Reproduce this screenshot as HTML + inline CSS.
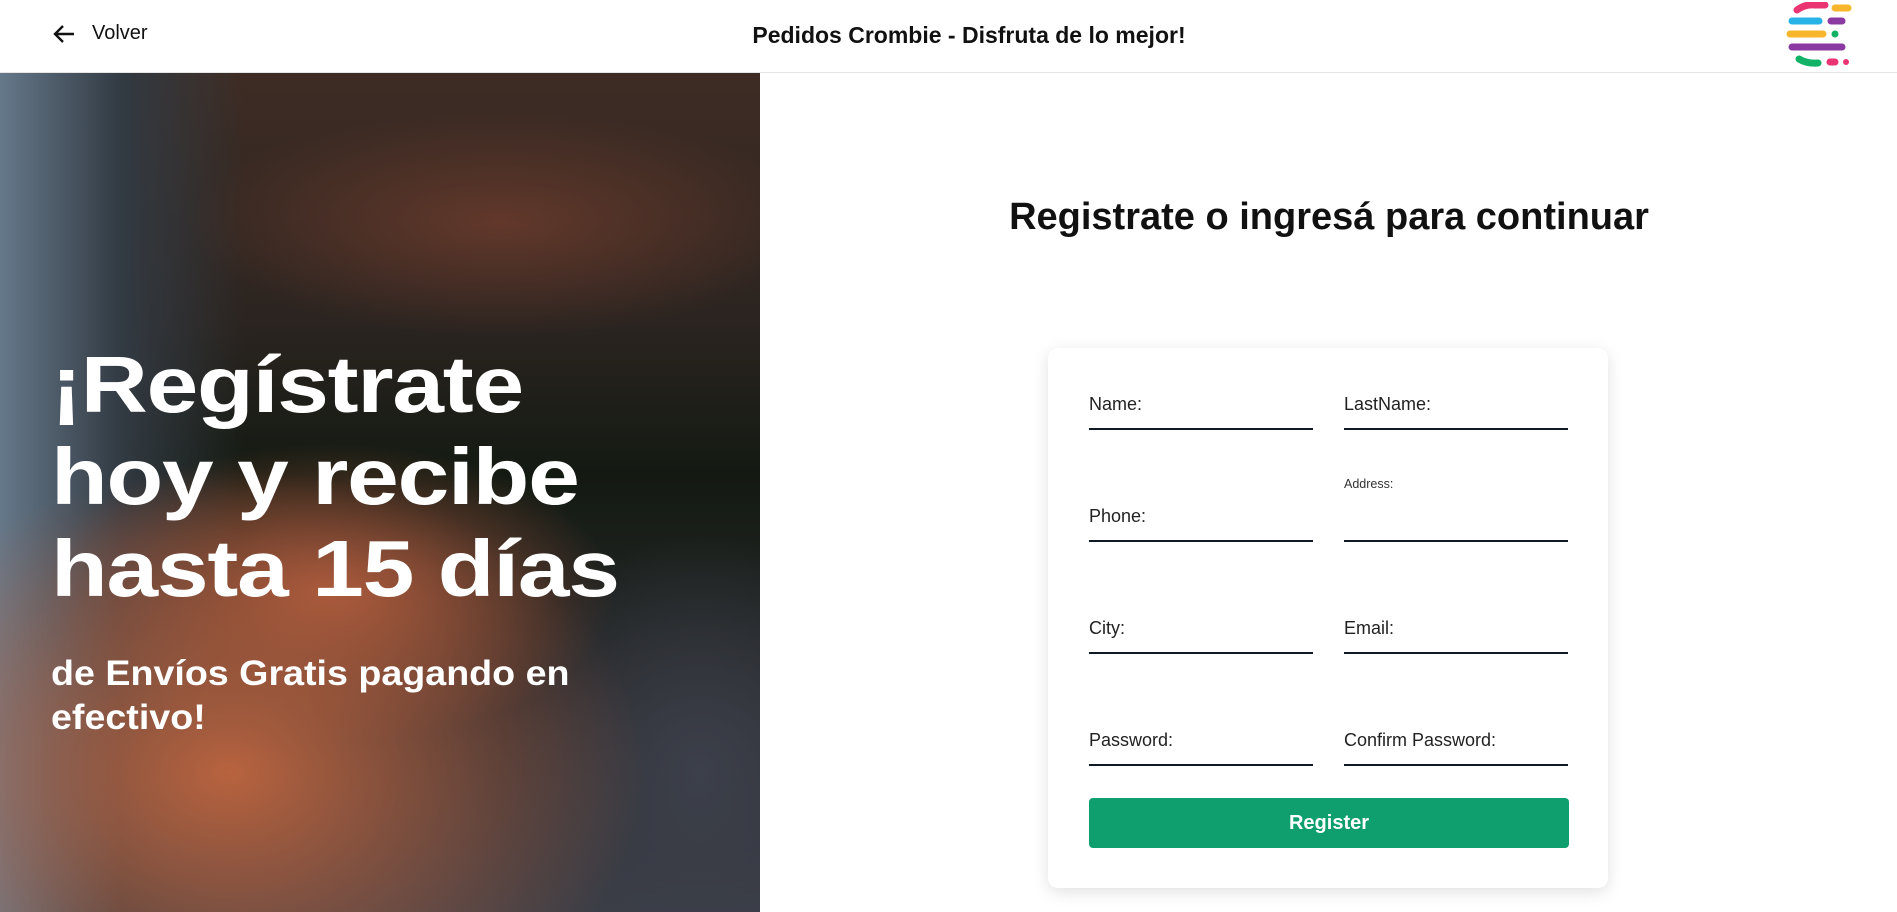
<!DOCTYPE html>
<html><head><meta charset="utf-8"><style>
*{margin:0;padding:0;box-sizing:border-box}
body{width:1897px;height:912px;overflow:hidden;background:#fff;font-family:"Liberation Sans",sans-serif;position:relative;color:#111}
.hdr{position:absolute;left:0;top:0;width:1897px;height:73px;border-bottom:1px solid #e5e5e5;background:#fff}
.back{position:absolute;left:52px;top:22px;display:flex;align-items:center;font-size:20px;font-weight:500}
.back svg{margin-right:16px}
.title{position:absolute;left:0;width:1938px;text-align:center;top:22px;font-size:23px;font-weight:600}
.logo{position:absolute;left:1785px;top:2px}
.img{position:absolute;left:0;top:73px;width:760px;height:839px;overflow:hidden;
background:
radial-gradient(ellipse 420px 150px at 500px 150px,rgba(110,60,45,.8),transparent 75%),
radial-gradient(ellipse 520px 380px at 230px 700px,#b8633f,transparent 80%),
radial-gradient(ellipse 380px 200px at 330px 520px,#a4553a,transparent 75%),
radial-gradient(ellipse 250px 300px at 700px 700px,#3c404a,transparent 80%),
linear-gradient(90deg,#65788a 0,#323a42 16%,transparent 32%),
linear-gradient(180deg,#3e2c24 0,#2b2420 30%,#131a12 48%,#2a2a2e 75%,#3a3d46 100%)}
.h1{position:absolute;left:51px;color:#fff;font-size:80px;font-weight:700;line-height:92px;letter-spacing:-1px;transform:scaleX(1.16);transform-origin:0 0;white-space:nowrap}
.h2{position:absolute;left:51px;color:#fff;font-size:35px;font-weight:700;line-height:44px;transform:scaleX(1.075);transform-origin:0 0;white-space:nowrap}
.head{position:absolute;left:960px;width:738px;text-align:center;top:196px;font-size:38px;font-weight:700}
.card{position:absolute;left:1048px;top:348px;width:560px;height:540px;background:#fff;border-radius:10px;box-shadow:0 4px 16px rgba(0,0,0,.12)}
.f{position:absolute;width:224px;border-bottom:2px solid #111827;height:40px}
.f span{position:absolute;left:0;bottom:13px;font-size:18px;color:#222}
.sm{position:absolute;font-size:12.5px;color:#333}
.btn{position:absolute;left:1089px;top:798px;width:480px;height:50px;background:#0f9f6e;border-radius:4px;color:#fff;font-weight:700;font-size:20px;text-align:center;line-height:50px}
</style></head><body>
<div class="hdr">
<div class="back"><svg width="24" height="22" viewBox="0 0 24 22"><path d="M22 11H3M11 3L3 11l8 8" fill="none" stroke="#111" stroke-width="2.4"/></svg>Volver</div>
<div class="title">Pedidos Crombie - Disfruta de lo mejor!</div>
<svg class="logo" width="70" height="66" viewBox="0 0 70 66">
<path d="M12 8 Q20 2 30 3 L40 3" stroke="#ea3572" stroke-width="7" stroke-linecap="round" fill="none"/>
<line x1="50" y1="6" x2="63" y2="6" stroke="#f8b62c" stroke-width="7" stroke-linecap="round"/>
<line x1="7" y1="19" x2="34" y2="19" stroke="#27b3e6" stroke-width="7" stroke-linecap="round"/>
<line x1="46" y1="19" x2="57" y2="19" stroke="#8a3aa0" stroke-width="7" stroke-linecap="round"/>
<line x1="5" y1="32" x2="38" y2="32" stroke="#f8b62c" stroke-width="7" stroke-linecap="round"/>
<circle cx="50" cy="32" r="3.5" fill="#12b266"/>
<line x1="7" y1="45" x2="57" y2="45" stroke="#8a3aa0" stroke-width="7" stroke-linecap="round"/>
<path d="M14 57 Q22 62 33 61" stroke="#12b266" stroke-width="7" stroke-linecap="round" fill="none"/>
<line x1="45" y1="60" x2="50" y2="60" stroke="#ea3572" stroke-width="7" stroke-linecap="round"/>
<circle cx="61" cy="60" r="3" fill="#ea3572"/>
</svg>
</div>
<div class="img">
<div class="h1" style="top:266px">¡Regístrate<br>hoy y recibe<br>hasta 15 días</div>
<div class="h2" style="top:579px">de Envíos Gratis pagando en<br>efectivo!</div>
</div>
<div class="head">Registrate o ingresá para continuar</div>
<div class="card"></div>
<div class="f" style="left:1089px;top:390px"><span>Name:</span></div>
<div class="f" style="left:1344px;top:390px"><span>LastName:</span></div>
<div class="f" style="left:1089px;top:502px"><span>Phone:</span></div>
<div class="f" style="left:1344px;top:502px"></div>
<div class="sm" style="left:1344px;top:477px">Address:</div>
<div class="f" style="left:1089px;top:614px"><span>City:</span></div>
<div class="f" style="left:1344px;top:614px"><span>Email:</span></div>
<div class="f" style="left:1089px;top:726px"><span>Password:</span></div>
<div class="f" style="left:1344px;top:726px"><span>Confirm Password:</span></div>
<div class="btn">Register</div>
</body></html>
